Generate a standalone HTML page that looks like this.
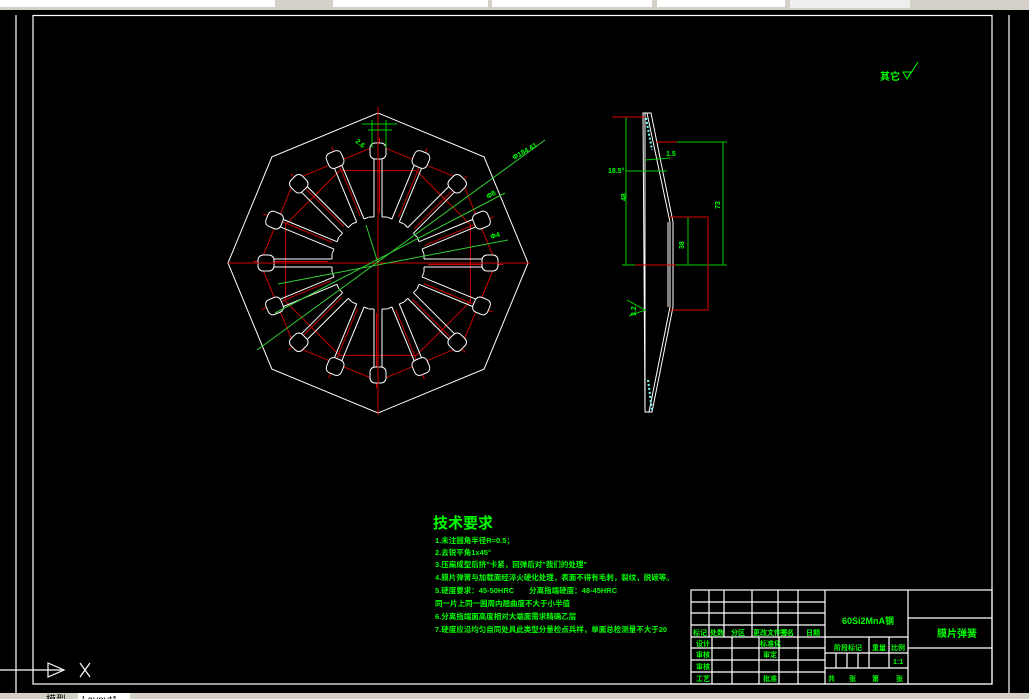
<!DOCTYPE html>
<html><head><meta charset="utf-8"><style>
html,body{margin:0;padding:0;background:#000;width:1029px;height:699px;overflow:hidden}
svg{display:block}
text{font-family:"Liberation Sans","Noto Sans CJK SC",sans-serif;fill:#00ff00;font-weight:bold}
</style></head><body>
<svg id="s" width="1029" height="699" viewBox="0 0 1029 699" xmlns="http://www.w3.org/2000/svg">
<rect x="0" y="0" width="1029" height="699" fill="#000"/>
<rect x="0" y="0" width="1029" height="10" fill="#d4d0c8"/>
<rect x="0" y="0" width="275" height="7" fill="#fff"/>
<rect x="333" y="0" width="155" height="7" fill="#fff"/>
<rect x="492" y="0" width="160" height="7" fill="#fff"/>
<rect x="657" y="0" width="128" height="7" fill="#fff"/>
<rect x="790" y="0" width="120" height="8" fill="#eee"/>
<g stroke="#fff" stroke-width="1.2" fill="none">
<line x1="16" y1="15" x2="16" y2="693"/>
<line x1="1009" y1="15" x2="1009" y2="693"/>
<rect x="33" y="15.5" width="959" height="668.5"/>
<line x1="0" y1="670" x2="62" y2="670"/>
<path d="M48,663 L64,670 L48,677 Z"/>
<path d="M80,663 L90,677 M90,663 L80,677"/>
</g>
<rect x="0" y="693" width="1029" height="6" fill="#d4d0c8"/>
<text x="46" y="703" style="fill:#000;font-size:10px;font-weight:normal">模型</text>
<rect x="78" y="693" width="52" height="6" fill="#fff"/>
<text x="82" y="703" style="fill:#000;font-size:10px;font-weight:normal">Layout1</text>

<g id="plan"></g>

<g fill="none" stroke-width="1">
<path d="M643,113 L647,113 L670,222 L670,307 L649,412 L645,412 Z" stroke="#fff"/>
<path d="M647,113 L651,113 L673,222 L673,307 L652,412 L649,412" stroke="#fff"/>
<line x1="645" y1="113" x2="645" y2="412" stroke="#fff"/>
<line x1="668" y1="222" x2="668" y2="307" stroke="#fff"/>
<path d="M646,118 L652,150 M648,380 L652,410" stroke="#7ff" stroke-width="2" stroke-dasharray="2,2"/>
<g stroke="#0c0">
<line x1="626" y1="117" x2="626" y2="265"/>
<line x1="622" y1="265" x2="727" y2="265"/>
<line x1="723" y1="142" x2="723" y2="265"/>
<line x1="676" y1="142" x2="727" y2="142"/>
<line x1="688" y1="217" x2="688" y2="265"/>
<line x1="625" y1="171" x2="667" y2="171"/>
<line x1="645" y1="160" x2="670" y2="158"/>
<path d="M627,300 L645,310 L629,316"/>
</g>
<g stroke="#d00">
<line x1="612" y1="117" x2="645" y2="117"/>
<line x1="656" y1="142" x2="677" y2="142"/>
<path d="M670,217 L708,217 L708,310 L670,310"/>
<line x1="635" y1="265" x2="676" y2="265"/>
</g>
</g>
<g style="font-size:7px">
<text x="608" y="173">18.5°</text>
<text x="620" y="195" transform="rotate(-90 626 195)">48</text>
<text x="666" y="156">1.5</text>
<text x="718" y="207" transform="rotate(-90 720 207)">73</text>
<text x="681" y="246" transform="rotate(-90 684 246)">38</text>
<text x="628" y="316" transform="rotate(-90 632 312)">3.2</text>
</g>

<text x="880" y="80" style="font-size:10px">其它</text>
<path d="M903,72 L911,72 L907,79 Z M907,79 L918,62" stroke="#0f0" fill="none"/>

<text x="433" y="528" style="font-size:15px">技术要求</text>
<g style="font-size:7.5px">
<text x="435" y="543">1.未注圆角半径R=0.5；</text>
<text x="435" y="555">2.去锐平角1x45°</text>
<text x="435" y="567">3.压扁成型后挤"卡紧，回弹后对"我们的处理"</text>
<text x="435" y="580">4.膜片弹簧与加载面经淬火硬化处理，表面不得有毛刺，裂纹，脱碳等。</text>
<text x="435" y="593">5.硬度要求：45-50HRC　　分离指端硬度：48-45HRC</text>
<text x="435" y="606">同一片上同一圆周内翘曲度不大于小半值</text>
<text x="435" y="619">6.分离指端面高度相对大端面需求精确乙层</text>
<text x="435" y="632">7.硬度应沿均匀自同处具此类型分量检点兵样，单面总检测量不大于20</text>
</g>

<g stroke="#fff" stroke-width="1.2" fill="none">
<rect x="691" y="590" width="301" height="94"/>
<path d="M691,602 H825 M691,613 H825 M691,625 H825 M691,637 H908 M691,648 H825 M691,660 H825 M691,672 H825"/>
<path d="M709,590 V637 M724,590 V637 M752,590 V637 M778,590 V637 M798,590 V684 M825,590 V684 M908,590 V684"/>
<path d="M712,637 V684 M732,637 V684 M759,637 V684 M779,637 V684"/>
<path d="M825,653 H908 M825,668 H908 M869,637 V668 M889,637 V668 M836,653 V668 M847,653 V668 M858,653 V668"/>
<path d="M908,618 H992 M908,648 H992"/>
</g>
<g style="font-size:7px">
<text x="693" y="635">标记</text><text x="710" y="635">处数</text><text x="731" y="635">分区</text><text x="753" y="635">更改文件号</text><text x="780" y="635">签名</text><text x="806" y="635">日期</text>
<text x="696" y="646">设计</text><text x="696" y="657">审核</text><text x="696" y="669">审核</text><text x="696" y="681">工艺</text>
<text x="760" y="646">标准化</text><text x="763" y="657">审定</text><text x="763" y="681">批准</text>
<text x="834" y="650">阶段标记</text><text x="872" y="650">重量</text><text x="891" y="650">比例</text>
<text x="893" y="664">1:1</text>
<text x="828" y="681">共</text><text x="849" y="681">张</text><text x="872" y="681">第</text><text x="896" y="681">张</text>
</g>
<text x="842" y="624" style="font-size:9px">60Si2MnA钢</text>
<text x="937" y="637" style="font-size:10px">膜片弹簧</text>
</svg>
<script>
(function(){
var g=document.getElementById('plan'),cx=378,cy=263,h='';
function pt(r,a){return [(cx+r*Math.cos(a)).toFixed(1),(cy+r*Math.sin(a)).toFixed(1)];}
function oct(R,off,col){var p=[];for(var i=0;i<8;i++){p.push(pt(R,off+i*Math.PI/4).join(','));}return '<polygon points="'+p.join(' ')+'" fill="none" stroke="'+col+'" stroke-width="1"/>';}
h+=oct(150,0,'#fff');
h+=oct(118,0,'#c00');
h+=oct(100,Math.PI/8,'#c00');
for(var i=0;i<16;i++){
 var a=i*Math.PI/8,c=Math.cos(a),s=Math.sin(a),nx=-s,ny=c;
 function P(r,o){return (cx+r*c+o*nx).toFixed(1)+','+(cy+r*s+o*ny).toFixed(1);}
 function L(r1,o1,r2,o2,col){var p=P(r1,o1).split(','),q=P(r2,o2).split(',');return '<line x1="'+p[0]+'" y1="'+p[1]+'" x2="'+q[0]+'" y2="'+q[1]+'" stroke="'+col+'" stroke-width="1"/>';}
 h+=L(46,-4,104,-4,'#fff')+L(46,4,104,4,'#fff');
 h+=L(46,-4,46,-9,'#fff')+L(46,4,46,9,'#fff');
 h+=L(50,1.5,125,1.5,'#c00');
 var q=pt(112,a);
 h+='<rect x="'+(q[0]-8)+'" y="'+(q[1]-8)+'" width="16" height="16" rx="5" fill="#000" stroke="#fff" stroke-width="1" transform="rotate('+(i*22.5)+' '+q[0]+' '+q[1]+')"/>';
}
h+='<line x1="228" y1="263" x2="530" y2="263" stroke="#c00"/>';
h+='<line x1="378" y1="107" x2="378" y2="415" stroke="#c00"/>';
var gl=[[545,140,257,350],[505,193,275,313],[508,240,278,284],[378,263,366,225]];
gl.forEach(function(l){h+='<line x1="'+l[0]+'" y1="'+l[1]+'" x2="'+l[2]+'" y2="'+l[3]+'" stroke="#3c3" stroke-width="1"/>';});
h+='<path d="M362,124 H397 M368,130 H392 M372,120 V148 M386,120 V148" stroke="#0c0" fill="none"/>';
h+='<text x="514" y="160" style="font-size:7px" transform="rotate(-30 514 160)">Φ184 41</text>';
h+='<text x="488" y="199" style="font-size:7px" transform="rotate(-30 488 199)">Φ8</text>';
h+='<text x="491" y="239" style="font-size:7px" transform="rotate(-15 491 239)">Φ4</text>';
h+='<text x="355" y="142" style="font-size:7px" transform="rotate(40 355 142)">2.6</text>';
g.innerHTML=h;
})();
</script>
</body></html>
